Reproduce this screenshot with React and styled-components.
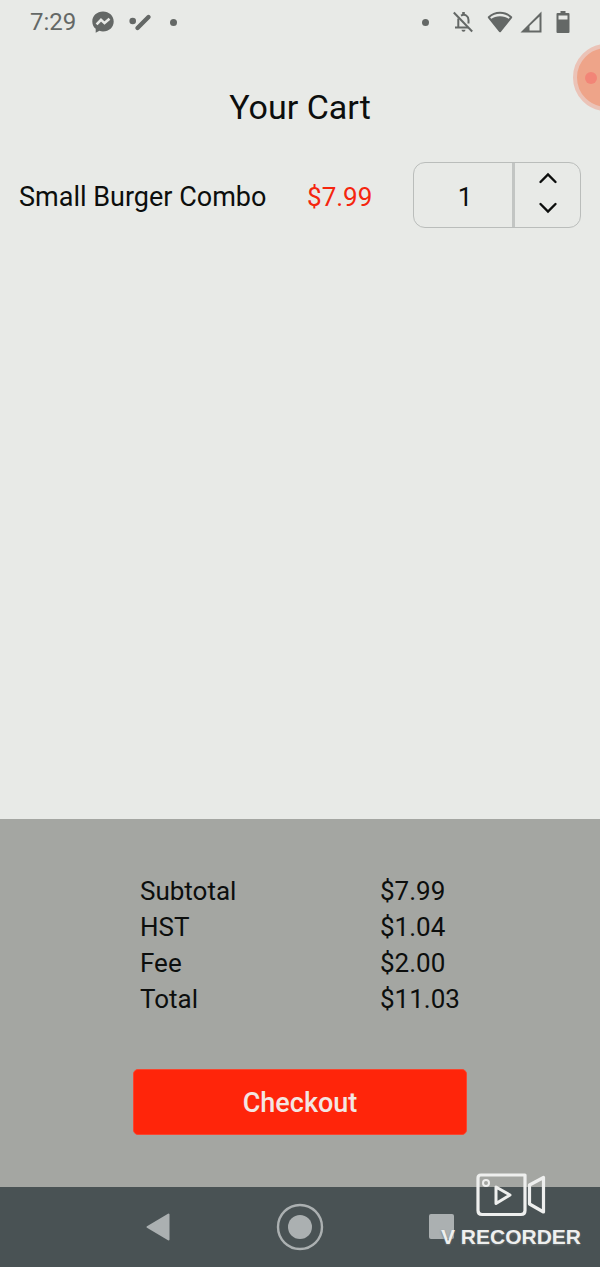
import React, { useState } from "react";
import styled, { createGlobalStyle } from "styled-components";

const GlobalStyle = createGlobalStyle`
  * { box-sizing: border-box; }
  body {
    margin: 0;
    background: #e8eae7;
    color: #0c0e0d;
    font-family: Roboto, "Liberation Sans", sans-serif;
    font-size: 27px;
    line-height: 36px;
  }
`;

const Screen = styled.div`
  position: relative;
  display: flex;
  flex-direction: column;
  min-height: 100vh;
  overflow: hidden;
`;

const StatusBar = styled.header`
  display: flex;
  justify-content: space-between;
  align-items: center;
  height: 44px;
  padding: 0 30px;
  color: #646866;
`;

const StatusGroup = styled.div`
  display: flex;
  align-items: center;
  gap: ${(p) => p.$gap}px;
`;

const Clock = styled.time`
  font-size: 24px;
`;

const Icon = styled.svg`
  display: block;
  flex: none;
  overflow: visible;
`;

const Dot = styled.span`
  width: 7px;
  height: 7px;
  border-radius: 50%;
  background: currentColor;
`;

const Title = styled.h1`
  margin: 41px 0 33px;
  font-size: 34px;
  font-weight: 400;
  line-height: 44px;
  text-align: center;
`;

const Main = styled.main`
  flex: 1;
`;

const CartList = styled.ul`
  list-style: none;
  margin: 0;
  padding: 0 19px;
`;

const CartItem = styled.li`
  display: flex;
  align-items: center;
  justify-content: space-between;
`;

const ItemText = styled.span`
  padding-top: 4px;
`;

const Price = styled(ItemText)`
  color: #f5260f;
  font-size: 26px;
`;

const Stepper = styled.div`
  display: flex;
  width: 168px;
  height: 66px;
  border: 1px solid #babdbb;
  border-radius: 12px;
`;

const Quantity = styled.input`
  flex: 1;
  min-width: 0;
  padding: 4px 0 0 4px;
  border: 0;
  background: none;
  color: inherit;
  font: inherit;
  font-size: 26px;
  text-align: center;
`;

const StepButtons = styled.div`
  display: flex;
  flex-direction: column;
  width: 68px;
  padding-bottom: 4px;
  border-left: 3px solid #c2c5c3;
`;

const StepButton = styled.button`
  display: flex;
  flex: 1;
  align-items: center;
  justify-content: center;
  padding: 0;
  border: 0;
  background: none;
  color: inherit;
`;

const Summary = styled.section`
  display: flex;
  flex-direction: column;
  align-items: center;
  gap: 52px;
  padding: 54px 20px 52px;
  background: #a4a6a2;
`;

const Totals = styled.table`
  width: 320px;
  border-collapse: collapse;
  table-layout: fixed;
  font-size: 26px;
`;

const TotalLabel = styled.th`
  width: 75%;
  padding: 0;
  font-weight: 400;
  text-align: left;
`;

const TotalValue = styled.td`
  padding: 0;
  white-space: nowrap;
`;

const CheckoutButton = styled.button`
  width: 334px;
  max-width: 100%;
  height: 66px;
  padding: 2px 0 0;
  border: 1px solid #f8452f;
  border-radius: 5px;
  background: #ff250a;
  color: #f3e6e2;
  font: inherit;
  font-weight: 500;
`;

const NavBar = styled.nav`
  display: flex;
  justify-content: center;
  height: 80px;
  background: #495254;
`;

const NavButton = styled.button`
  display: flex;
  width: 142px;
  align-items: center;
  justify-content: center;
  padding: 0;
  border: 0;
  background: none;
  color: #abb0b1;
`;

const RecordBubble = styled.button`
  position: absolute;
  top: 44px;
  right: -40px;
  display: flex;
  align-items: center;
  width: 67px;
  height: 67px;
  padding: 0 0 0 8px;
  border: 4px solid #ebc3b7;
  border-radius: 50%;
  background: #eea489;
`;

const BubbleDot = styled.span`
  width: 12px;
  height: 12px;
  border-radius: 50%;
  background: #f28577;
`;

const Watermark = styled.div`
  position: absolute;
  right: 19px;
  bottom: 18px;
  display: flex;
  flex-direction: column;
  align-items: center;
  gap: 8px;
  color: #eeefee;
  font-family: "Liberation Sans", Arial, sans-serif;
  font-size: 21px;
  font-weight: 700;
  line-height: 24px;
  text-shadow: 0 1px 2px #6b7172;
  pointer-events: none;
`;

const totals = [
  ["Subtotal", "$7.99"],
  ["HST", "$1.04"],
  ["Fee", "$2.00"],
  ["Total", "$11.03"],
];

function Chevron({ d }) {
  return (
    <Icon width="18" height="12" viewBox="0 0 18 12" fill="none" stroke="currentColor" strokeWidth="2.4" aria-hidden="true">
      <path d={d} strokeLinecap="round" strokeLinejoin="miter" />
    </Icon>
  );
}

function MessengerIcon() {
  return (
    <Icon width="22" height="22" viewBox="0 0 22 22" aria-hidden="true">
      <path fill="currentColor" d="M11 .5C5 .5.3 4.7.3 10.4c0 3 1.3 5.6 3.4 7.4v3.9l3.7-1.9c1.1.4 2.3.6 3.6.6 6 0 10.7-4.3 10.7-10S17 .5 11 .5z" />
      <path fill="none" stroke="#e8eae7" strokeWidth="2.6" d="M4.6 13.3 9 8.9l3.5 3.2 5-4.3" />
    </Icon>
  );
}

function TickIcon() {
  return (
    <Icon width="24" height="18" viewBox="2 0 24 18" aria-hidden="true">
      <circle cx="4.7" cy="8" r="3.3" fill="currentColor" />
      <path d="M9.5 15 20.5 4" stroke="currentColor" strokeWidth="4.4" strokeLinecap="round" />
    </Icon>
  );
}

function BellOffIcon() {
  return (
    <Icon width="20" height="22" viewBox="0 0 20 22" fill="none" stroke="currentColor" strokeWidth="2" aria-hidden="true">
      <path d="M.8 1.5 19.2 20.5" />
      <path d="M5.3 7.5V16.5M2 16.5H15M8 4.6C12 2.5 15.5 5 15.5 9V12.5" />
      <path d="M10.5 1V4" strokeWidth="2.6" />
      <path d="M8.5 18.8a2 2 0 0 0 4 0z" fill="currentColor" stroke="none" />
    </Icon>
  );
}

function WifiIcon() {
  return (
    <Icon width="26" height="22" viewBox="0 0 26 22" aria-hidden="true">
      <path d="M1.8 6.3C8 .3 18 .3 24.2 6.3L13 20.3z" fill="none" stroke="currentColor" strokeWidth="2" strokeLinejoin="round" />
      <path d="M3.5 8.2C9 4.3 17 4.3 22.5 8.2L13 20.5z" fill="currentColor" />
    </Icon>
  );
}

function SignalIcon() {
  return (
    <Icon width="22" height="22" viewBox="0 0 22 22" aria-hidden="true">
      <path d="M21.5.5V21.5H.5z M19.5 5.5 9.5 15V19.5H19.5z" fill="currentColor" fillRule="evenodd" />
    </Icon>
  );
}

function BatteryIcon() {
  return (
    <Icon width="14" height="22" viewBox="0 0 14 22" aria-hidden="true">
      <path d="M4.5 0h5v2H12.5q1 0 1 1V21q0 1-1 1H1.5q-1 0-1-1V3q0-1 1-1h3z M2.5 4.5V8.5h9V4.5z" fill="currentColor" fillRule="evenodd" />
    </Icon>
  );
}

function CameraIcon() {
  return (
    <Icon width="70" height="44" viewBox="0 0 70 44" fill="none" stroke="currentColor" strokeWidth="3.2" strokeLinejoin="round" aria-hidden="true">
      <path d="M5 2H49V37.5Q49 41.5 45 41.5H6Q2 41.5 2 37.5V5Q2 2 5 2z" />
      <circle cx="10" cy="10" r="3" strokeWidth="2" />
      <path d="M20 14V30.5L34 22z" strokeWidth="3" />
      <path d="M53.5 12 67.5 4.5V39L53.5 31z" />
    </Icon>
  );
}

export default function App() {
  const [quantity, setQuantity] = useState(1);

  return (
    <>
      <GlobalStyle />
      <Screen>
        <StatusBar>
          <StatusGroup $gap={16}>
            <Clock>7:29</Clock>
            <MessengerIcon />
            <TickIcon />
            <Dot />
          </StatusGroup>
          <StatusGroup $gap={14}>
            <StatusGroup $gap={24}>
              <Dot />
              <BellOffIcon />
            </StatusGroup>
            <StatusGroup $gap={7}>
              <WifiIcon />
              <SignalIcon />
            </StatusGroup>
            <BatteryIcon />
          </StatusGroup>
        </StatusBar>

        <Main>
          <Title>Your Cart</Title>
          <CartList>
            <CartItem>
              <ItemText>Small Burger Combo</ItemText>
              <Price>$7.99</Price>
              <Stepper>
                <Quantity
                  aria-label="Quantity"
                  inputMode="numeric"
                  value={quantity}
                  onChange={(e) => setQuantity(Number(e.target.value) || 0)}
                />
                <StepButtons>
                  <StepButton type="button" aria-label="Increase quantity" onClick={() => setQuantity(quantity + 1)}>
                    <Chevron d="M1.5 10 9 2.5 16.5 10" />
                  </StepButton>
                  <StepButton type="button" aria-label="Decrease quantity" onClick={() => setQuantity(Math.max(0, quantity - 1))}>
                    <Chevron d="M1.5 2 9 9.5 16.5 2" />
                  </StepButton>
                </StepButtons>
              </Stepper>
            </CartItem>
          </CartList>
        </Main>

        <Summary>
          <Totals>
            <tbody>
              {totals.map(([label, value]) => (
                <tr key={label}>
                  <TotalLabel scope="row">{label}</TotalLabel>
                  <TotalValue>{value}</TotalValue>
                </tr>
              ))}
            </tbody>
          </Totals>
          <CheckoutButton type="button">Checkout</CheckoutButton>
        </Summary>

        <NavBar>
          <NavButton type="button" aria-label="Back">
            <Icon width="24" height="28" viewBox="0 0 24 28" aria-hidden="true">
              <path d="M1.5 14 22.5 1.5V26.5z" fill="currentColor" stroke="currentColor" strokeWidth="2" strokeLinejoin="round" />
            </Icon>
          </NavButton>
          <NavButton type="button" aria-label="Home">
            <Icon width="46" height="46" viewBox="0 0 46 46" aria-hidden="true">
              <circle cx="23" cy="23" r="22" fill="none" stroke="currentColor" strokeWidth="2.4" />
              <circle cx="23" cy="23" r="12" fill="currentColor" />
            </Icon>
          </NavButton>
          <NavButton type="button" aria-label="Recent apps">
            <Icon width="26" height="26" viewBox="0 0 26 26" aria-hidden="true">
              <rect width="25" height="25" rx="2" fill="currentColor" />
            </Icon>
          </NavButton>
        </NavBar>

        <RecordBubble type="button" aria-label="Recorder controls">
          <BubbleDot />
        </RecordBubble>
        <Watermark>
          <CameraIcon />
          <span>V RECORDER</span>
        </Watermark>
      </Screen>
    </>
  );
}
